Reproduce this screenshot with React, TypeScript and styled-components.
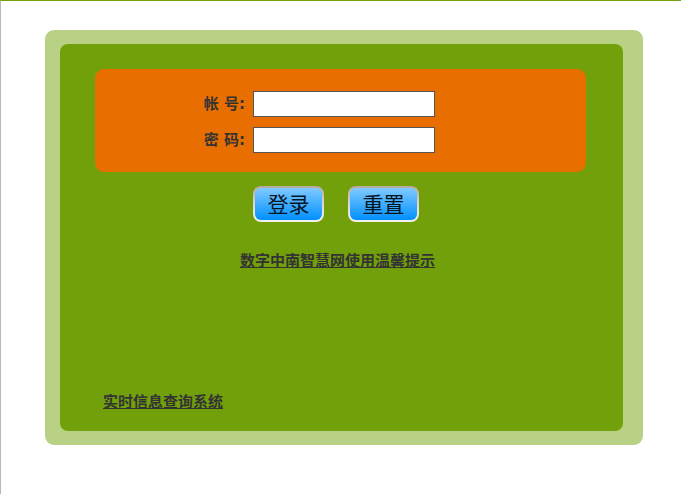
import React from "react";
import styled, { createGlobalStyle } from "styled-components";

const GlobalStyle = createGlobalStyle`
  * { box-sizing: border-box; }
  body {
    margin: 0;
    background: #ffffff;
    color: #333333;
    font-family: "DejaVu Sans", "Noto Sans CJK SC", sans-serif;
    font-size: 15px;
    line-height: 20px;
  }
`;

const Page = styled.main`
  min-height: 100vh;
  padding: 29px 38px 40px 44px;
  border-top: 1px solid #72a00b;
  border-left: 1px solid #b8b8b8;
`;

const Frame = styled.section`
  padding: 14px 20px 14px 15px;
  border-radius: 9px;
  background: #b8d184;
`;

const Panel = styled.div`
  display: flex;
  flex-direction: column;
  min-height: 387px;
  padding: 25px 37px 20px 35px;
  border-radius: 8px;
  background: #72a00b;
`;

const Fields = styled.div`
  display: grid;
  gap: 10px;
  padding: 22px 0 19px;
  border-radius: 9px;
  background: #e86e00;
`;

const Field = styled.div`
  display: grid;
  grid-template-columns: 150px 182px;
  column-gap: 8px;
  align-items: center;
`;

const Label = styled.label`
  text-align: right;
  font-weight: bold;
`;

const TextInput = styled.input`
  width: 100%;
  height: 26px;
  padding: 2px 4px;
  border: 1px solid #555555;
  border-radius: 0;
  background: #ffffff;
  font: inherit;
`;

const Actions = styled.div`
  display: flex;
  gap: 24px;
  padding: 14px 0 0 158px;
`;

const ActionButton = styled.button`
  width: 71px;
  height: 36px;
  padding: 0 0 2px;
  border: 2px solid transparent;
  border-radius: 8px;
  background:
    linear-gradient(#80c9ff, #40adff 50%, #0090ff) padding-box,
    linear-gradient(#b3aa99, #dcd8d3 50%, #f4f1ef) border-box;
  color: #07151f;
  font-family: "Noto Sans CJK SC", sans-serif;
  font-size: 21px;
  font-weight: 400;
  line-height: 30px;
  cursor: pointer;
`;

const TextLink = styled.a`
  color: #333333;
  font-family: "Noto Sans CJK SC", sans-serif;
  font-weight: bold;
  text-decoration: underline;
  text-decoration-thickness: 1px;
  text-underline-offset: 1px;
`;

const TipsLink = styled(TextLink)`
  align-self: center;
  margin: 28px 6px 0 0;
`;

const QueryLink = styled(TextLink)`
  align-self: flex-start;
  margin: auto 0 0 8px;
`;

export default function App() {
  return (
    <>
      <GlobalStyle />
      <Page>
        <Frame>
          <Panel>
            <form onSubmit={(event) => event.preventDefault()}>
              <Fields>
                <Field>
                  <Label htmlFor="account">帐 号:</Label>
                  <TextInput id="account" type="text" autoComplete="username" />
                </Field>
                <Field>
                  <Label htmlFor="password">密 码:</Label>
                  <TextInput id="password" type="password" autoComplete="current-password" />
                </Field>
              </Fields>
              <Actions>
                <ActionButton type="submit">登录</ActionButton>
                <ActionButton type="reset">重置</ActionButton>
              </Actions>
            </form>
            <TipsLink href="#tips">数字中南智慧网使用温馨提示</TipsLink>
            <QueryLink href="#query">实时信息查询系统</QueryLink>
          </Panel>
        </Frame>
      </Page>
    </>
  );
}
